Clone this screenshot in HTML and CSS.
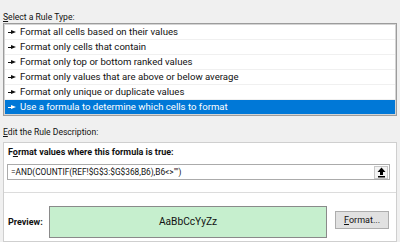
FILE: index.html
```html
<!DOCTYPE html>
<html lang="en">
<head>
    <meta charset="UTF-8">
    <title>New Formatting Rule</title>
    <link rel="stylesheet" href="styles.css">
</head>
<body>
    <!-- Rule type list -->
    <div class="label"><u>S</u>elect a Rule Type:</div>
    <ul class="rule-list">
        <li><span class="arrow"></span>Format all cells based on their values</li>
        <li><span class="arrow"></span>Format only cells that contain</li>
        <li><span class="arrow"></span>Format only top or bottom ranked values</li>
        <li><span class="arrow"></span>Format only values that are above or below average</li>
        <li><span class="arrow"></span>Format only unique or duplicate values</li>
        <li class="selected"><span class="arrow"></span>Use a formula to determine which cells to format</li>
    </ul>

    <!-- Rule description -->
    <div class="label label-edit"><u>E</u>dit the Rule Description:</div>
    <div class="desc">
        <div class="desc-top">
            <div class="desc-title">F<u>o</u>rmat values where this formula is true:</div>
            <div class="formula">
                <span class="formula-text">=AND(COUNTIF(REF!$G$3:$G$368,B6),B6&lt;&gt;"")</span>
                <span class="collapse-btn">
                    <svg width="9" height="11" viewBox="0 0 9 11">
                        <path d="M4.5 0.5 L8.5 5 L6 5 L6 8 L3 8 L3 5 L0.5 5 Z" fill="#000"/>
                        <rect x="1" y="9" width="7" height="1.5" fill="#000"/>
                    </svg>
                </span>
            </div>
        </div>
        <div class="desc-bottom">
            <div class="preview-label">Preview:</div>
            <div class="preview-box">AaBbCcYyZz</div>
            <div class="format-btn"><u>F</u>ormat...</div>
        </div>
    </div>
</body>
</html>
```

FILE: styles.css
```css
/* Base */
* {
    margin: 0;
    padding: 0;
    box-sizing: border-box;
}

body {
    width: 400px;
    height: 242px;
    background-color: #f0f0f0;
    color: #111;
    font-family: Roboto, 'Noto Sans', sans-serif;
    font-size: 9px;
    line-height: 14px;
    overflow: hidden;
}

u {
    text-decoration: underline;
    text-underline-offset: 1px;
}

.label {
    padding: 10px 0 0 3px;
    height: 23px;
    font-size: 8.6px;
}

.label-edit {
    padding-top: 9px;
    height: 26px;
}

/* Rule list */
.rule-list {
    list-style: none;
    margin: 0 3px;
    background-color: #fff;
    border: 1px solid #9c9c9c;
    box-shadow: inset 0 0 0 1px #d4d4d4;
    padding: 1px;
    font-size: 9.6px;
}

.rule-list li {
    height: 15px;
    line-height: 14px;
    padding-left: 3px;
    border-bottom: 1px solid #f0f0f0;
    display: flex;
    align-items: center;
    white-space: nowrap;
}

.rule-list li.selected {
    height: 14px;
    border-bottom: none;
    background-color: #0078d7;
    color: #fff;
}

.arrow {
    width: 8px;
    height: 5px;
    margin-right: 4px;
    position: relative;
    flex-shrink: 0;
}

.arrow::before {
    content: '';
    position: absolute;
    left: 0;
    top: 2px;
    width: 4px;
    height: 1px;
    background-color: currentColor;
}

.arrow::after {
    content: '';
    position: absolute;
    left: 3px;
    top: 0;
    border-left: 5px solid currentColor;
    border-top: 2.5px solid transparent;
    border-bottom: 2.5px solid transparent;
}

/* Rule description */
.desc {
    margin: 0 3px;
    height: 100px;
    background-color: #fff;
    border: 1px solid #cfcfcf;
    display: flex;
    flex-direction: column;
}

.desc-top {
    padding: 3px 6px 0 3px;
    height: 50px;
    border-bottom: 1px solid #dcdcdc;
}

.desc-title {
    font-weight: bold;
    padding-left: 1px;
    height: 18px;
    line-height: 12px;
}

.formula {
    height: 16px;
    border: 1px solid #ababab;
    display: flex;
    align-items: center;
    justify-content: space-between;
    padding: 0 1px 0 3px;
}

.formula-text {
    font-size: 8.3px;
}

.collapse-btn {
    width: 14px;
    height: 13px;
    border: 1px solid #c8c8c8;
    background-color: #f4f4f4;
    display: flex;
    align-items: center;
    justify-content: center;
}

.desc-bottom {
    flex: 1;
    display: flex;
    align-items: center;
    padding: 12px 6px 2px 4px;
}

.preview-label {
    font-weight: bold;
    width: 41px;
    flex-shrink: 0;
}

.preview-box {
    width: 278px;
    height: 32px;
    background-color: #c6efce;
    border: 1px solid #8a8a8a;
    display: flex;
    align-items: center;
    justify-content: center;
    font-size: 10.2px;
}

.format-btn {
    margin-left: 8px;
    margin-top: -4px;
    width: 54px;
    height: 18px;
    background-color: #e1e1e1;
    border: 1px solid #adadad;
    display: flex;
    align-items: center;
    justify-content: center;
}
```
